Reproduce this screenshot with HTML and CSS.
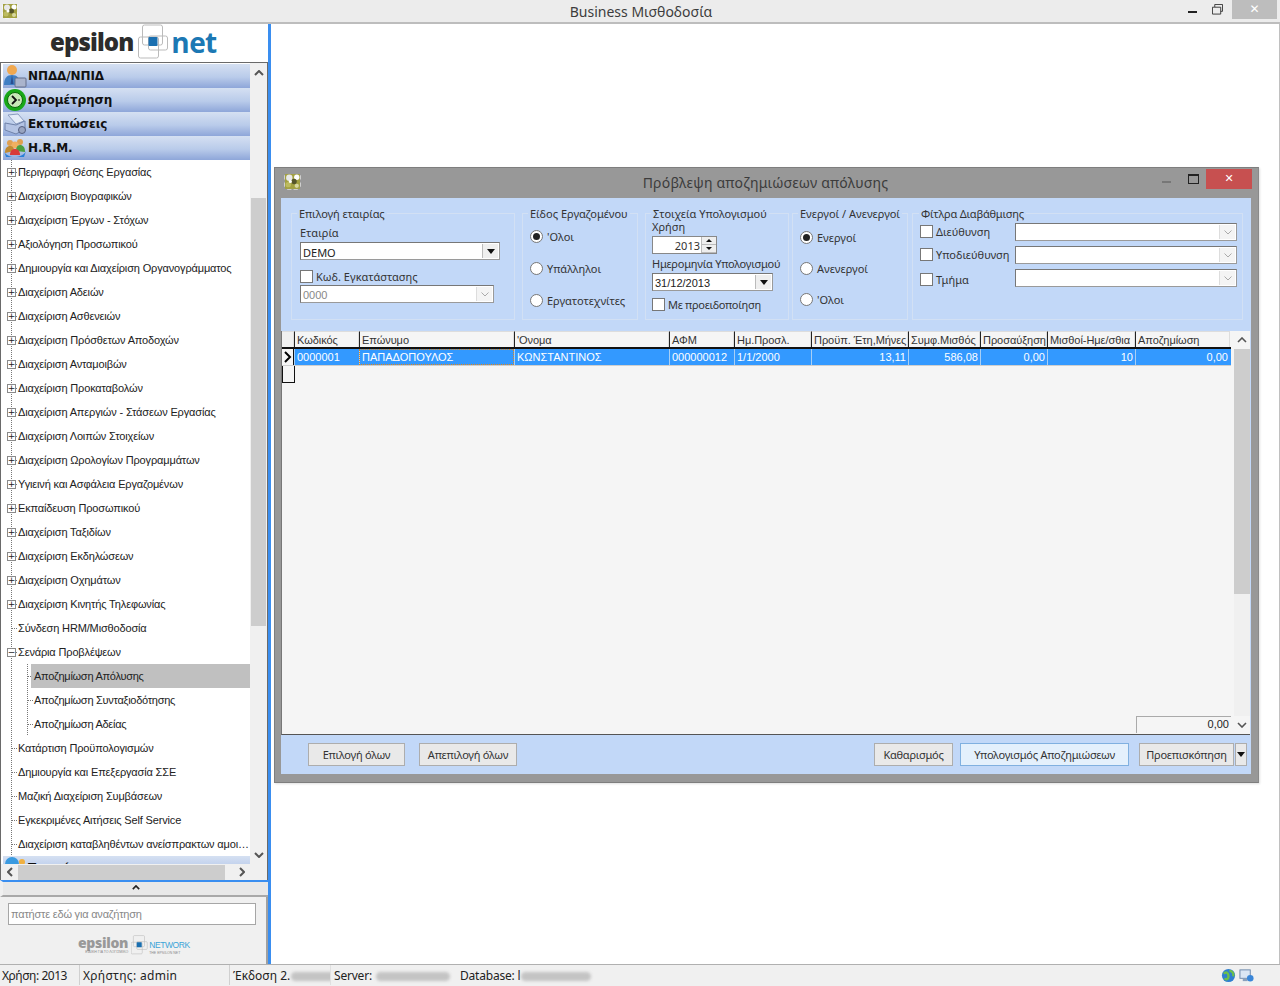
FILE: index.html
```html
<!DOCTYPE html>
<html lang="el">
<head>
<meta charset="utf-8">
<title>Business Μισθοδοσία</title>
<link rel="stylesheet" href="styles.css">
</head>
<body>
<svg class="defs" width="0" height="0" aria-hidden="true">
  <symbol id="app" viewBox="0 0 16 16">
    <rect x="1" y="1" width="14" height="14" fill="#a3a140"/>
    <circle cx="5" cy="4.500" r="3" fill="#e8e8e8"/><circle cx="12" cy="4" r="2.500" fill="#fff"/>
    <circle cx="9.500" cy="8" r="2.500" fill="#55552a"/><circle cx="4" cy="11" r="2.500" fill="#bdbb60"/>
    <circle cx="12" cy="12" r="2" fill="#d8d8a0"/><circle cx="6" cy="8" r="1.500" fill="#fff"/>
    <path d="M0 2v4M0 9v4M3 16h4M9 16h4M16 2v4M16 9v4" stroke="#fff" stroke-width="1"/>
  </symbol>
  <symbol id="squares" viewBox="0 0 30 36">
    <rect x="4" y="1" width="20" height="20" rx="2" fill="none" stroke="#bbb"/>
    <rect x="10" y="12" width="19" height="14" rx="2" fill="none" stroke="#bbb"/>
    <rect x="0" y="13" width="20" height="21" rx="2" fill="none" stroke="#bbb"/>
    <rect x="10" y="13" width="9" height="9" rx="1" fill="#1a6fb0"/>
  </symbol>
</svg>

<header class="titlebar">
  <svg class="app-icon"><use href="#app"/></svg>
  <div class="app-title">Business Μισθοδοσία</div>
  <div class="win-controls">
    <span class="ctl-min"></span>
    <svg class="ctl-max" viewBox="0 0 12 12"><path d="M3 3.500h6.500v7.500H.5V3.500H3V.5h8.500v7.500H9.500" fill="none" stroke="#333" stroke-width="1"/></svg>
    <span class="ctl-close">✕</span>
  </div>
</header>

<div class="main">
  <aside class="sidebar">
    <div class="logo">
      <span class="logo-e">epsilon</span>
      <svg class="logo-sq"><use href="#squares"/></svg>
      <span class="logo-n">net</span>
    </div>
    <div class="treebox">
      <div class="tree-top">
        <nav class="tree">
          <div class="hdr">
            <svg class="hdr-ic" viewBox="0 0 24 24"><circle cx="9" cy="6" r="5" fill="#f0a850"/><path d="M1 21c0-7 3-10 8-10s8 3 8 10z" fill="#3f7fc4"/><path d="M9 11l-1.500 9h3z" fill="#2a4f90"/><rect x="12" y="14" width="11" height="9" rx="1" fill="#aab4cc" stroke="#66708c"/></svg>
            <span>ΝΠΔΔ/ΝΠΙΔ</span>
          </div>
          <div class="hdr">
            <svg class="hdr-ic" viewBox="0 0 24 24"><circle cx="12" cy="12" r="11" fill="#18a818"/><circle cx="12" cy="12" r="7.500" fill="#c8e8b8" stroke="#0a6a0a"/><path d="M9 8l4 4-4 4" fill="none" stroke="#111" stroke-width="1.800"/><path d="M15 12h2" stroke="#111"/></svg>
            <span>Ωρομέτρηση</span>
          </div>
          <div class="hdr">
            <svg class="hdr-ic" viewBox="0 0 24 24"><path d="M5 3l10-1 6 7-8 3z" fill="#e4ecf8" stroke="#8a9cc0"/><path d="M2 11l11 2 9-4v8l-9 5-11-4z" fill="#b4c4e4" stroke="#6f82aa"/><circle cx="19" cy="18" r="3.500" fill="#98a4c0" stroke="#555f80"/></svg>
            <span>Εκτυπώσεις</span>
          </div>
          <div class="hdr">
            <svg class="hdr-ic" viewBox="0 0 24 24"><path d="M1 15c3 8 18 8 22 0l-2 6H3z" fill="#2a80d8"/><circle cx="7" cy="7" r="3" fill="#e0a050"/><circle cx="17" cy="6" r="3" fill="#e0a050"/><circle cx="12" cy="9" r="3.500" fill="#f0b060"/><path d="M2 17c0-5 2-7 5-7s4 2 4 5z" fill="#c08a30"/><path d="M13 15c0-3 1-6 4-6s5 2 5 7z" fill="#4aa040"/><path d="M7 19c0-4 2-6 5-6s5 2 5 6z" fill="#d83a3a"/></svg>
            <span>H.R.M.</span>
          </div>
          <div class="node"><i class="pm">+</i><span>Περιγραφή Θέσης Εργασίας</span></div>
          <div class="node"><i class="pm">+</i><span>Διαχείριση Βιογραφικών</span></div>
          <div class="node"><i class="pm">+</i><span>Διαχείριση Έργων - Στόχων</span></div>
          <div class="node"><i class="pm">+</i><span>Αξιολόγηση Προσωπικού</span></div>
          <div class="node"><i class="pm">+</i><span>Δημιουργία και Διαχείριση Οργανογράμματος</span></div>
          <div class="node"><i class="pm">+</i><span>Διαχείριση Αδειών</span></div>
          <div class="node"><i class="pm">+</i><span>Διαχείριση Ασθενειών</span></div>
          <div class="node"><i class="pm">+</i><span>Διαχείριση Πρόσθετων Αποδοχών</span></div>
          <div class="node"><i class="pm">+</i><span>Διαχείριση Ανταμοιβών</span></div>
          <div class="node"><i class="pm">+</i><span>Διαχείριση Προκαταβολών</span></div>
          <div class="node"><i class="pm">+</i><span>Διαχείριση Απεργιών - Στάσεων Εργασίας</span></div>
          <div class="node"><i class="pm">+</i><span>Διαχείριση Λοιπών Στοιχείων</span></div>
          <div class="node"><i class="pm">+</i><span>Διαχείριση Ωρολογίων Προγραμμάτων</span></div>
          <div class="node"><i class="pm">+</i><span>Υγιεινή και Ασφάλεια Εργαζομένων</span></div>
          <div class="node"><i class="pm">+</i><span>Εκπαίδευση Προσωπικού</span></div>
          <div class="node"><i class="pm">+</i><span>Διαχείριση Ταξιδίων</span></div>
          <div class="node"><i class="pm">+</i><span>Διαχείριση Εκδηλώσεων</span></div>
          <div class="node"><i class="pm">+</i><span>Διαχείριση Οχημάτων</span></div>
          <div class="node"><i class="pm">+</i><span>Διαχείριση Κινητής Τηλεφωνίας</span></div>
          <div class="node leaf"><span>Σύνδεση HRM/Μισθοδοσία</span></div>
          <div class="node"><i class="pm">−</i><span>Σενάρια Προβλέψεων</span></div>
          <div class="child selected"><span>Αποζημίωση Απόλυσης</span></div>
          <div class="child"><span>Αποζημίωση Συνταξιοδότησης</span></div>
          <div class="child"><span>Αποζημίωση Αδείας</span></div>
          <div class="node leaf"><span>Κατάρτιση Προϋπολογισμών</span></div>
          <div class="node leaf"><span>Δημιουργία και Επεξεργασία ΣΣΕ</span></div>
          <div class="node leaf"><span>Μαζική Διαχείριση Συμβάσεων</span></div>
          <div class="node leaf"><span>Εγκεκριμένες Αιτήσεις Self Service</span></div>
          <div class="node leaf"><span>Διαχείριση καταβληθέντων ανείσπρακτων αμοι…</span></div>
          <div class="hdr">
            <svg class="hdr-ic" viewBox="0 0 24 24"><circle cx="9" cy="8" r="7" fill="#3a9ae0"/><circle cx="19" cy="6" r="3" fill="#f0b040"/></svg>
            <span>Τροφή</span>
          </div>
        </nav>
        <div class="vbar">
          <svg class="arr" viewBox="0 0 10 6"><path d="M1 5l4-4 4 4" fill="none" stroke="#555" stroke-width="2"/></svg>
          <div class="v-track"><div class="v-thumb"></div></div>
          <svg class="arr" viewBox="0 0 10 6"><path d="M1 1l4 4 4-4" fill="none" stroke="#555" stroke-width="2"/></svg>
        </div>
      </div>
      <div class="hbar">
        <svg class="arr-h" viewBox="0 0 6 10"><path d="M5 1L1 5l4 4" fill="none" stroke="#555" stroke-width="2"/></svg>
        <div class="h-track"><div class="h-thumb"></div></div>
        <svg class="arr-h" viewBox="0 0 6 10"><path d="M1 1l4 4-4 4" fill="none" stroke="#555" stroke-width="2"/></svg>
      </div>
    </div>
    <div class="collapse">
      <svg class="arr-c" viewBox="0 0 10 6"><path d="M1 5l4-4 4 4" fill="none" stroke="#222" stroke-width="2"/></svg>
    </div>
    <div class="search-panel">
      <div class="search">πατήστε εδώ για αναζήτηση</div>
      <div class="netlogo">
        <div class="netlogo-l"><span class="nl-e">epsilon</span><span class="nl-s">ΕΙΔΙΚΗ ΓΙΑ ΤΟ ΛΟΓΙΣΜΙΚΟ</span></div>
        <svg class="nl-sq"><use href="#squares"/></svg>
        <div class="netlogo-r"><span class="nl-n">NETWORK</span><span class="nl-s nl-s2">THE EPSILON NET</span></div>
      </div>
    </div>
  </aside>
  <div class="workspace"></div>
</div>

<footer class="status">
  <span class="st st-year">Χρήση: 2013</span>
  <span class="st st-user">Χρήστης: admin</span>
  <span class="st st-ver">Έκδοση 2.<b class="blur b1"></b></span>
  <span class="st st-srv">Server: <b class="blur b2"></b></span>
  <span class="st st-db">Database: l<b class="blur b3"></b></span>
  <span class="st-icons">
    <svg class="st-ic" viewBox="0 0 16 16"><circle cx="8" cy="8" r="7" fill="#2f7fd0"/><path d="M3 6c3-3 5 0 5 3s-3 4-4 2M9 3c3 0 5 3 4 6" fill="none" stroke="#6cc04a" stroke-width="2.500"/></svg>
    <svg class="st-ic" viewBox="0 0 16 16"><rect x="1" y="2" width="11" height="9" fill="#dbe6f4" stroke="#6a86aa"/><rect x="4" y="11" width="5" height="3" fill="#8aa0bc"/><circle cx="12" cy="11" r="3.500" fill="#3a86d8"/></svg>
  </span>
</footer>

<section class="dialog">
  <div class="dlg-title">
    <svg class="dlg-icon"><use href="#app"/></svg>
    <div class="dlg-name">Πρόβλεψη αποζημιώσεων απόλυσης</div>
    <span class="dlg-min"></span>
    <span class="dlg-max"></span>
    <span class="dlg-close">✕</span>
  </div>
  <div class="dlg-body">
    <div class="filters">
      <fieldset class="grp g1">
        <legend>Επιλογή εταιρίας</legend>
        <div class="lbl">Εταιρία</div>
        <div class="combo c-demo"><span class="c-val val-big">DEMO</span><span class="c-btn"><i class="tri"></i></span></div>
        <div class="chk-row r-kod"><span class="chk"></span><span>Κωδ. Εγκατάστασης</span></div>
        <div class="combo c-off"><span class="c-val dis">0000</span><span class="c-btn off"><svg viewBox="0 0 8 5"><path d="M.5.5L4 4 7.500.5" fill="none" stroke="#aaa"/></svg></span></div>
      </fieldset>
      <fieldset class="grp g2">
        <legend>Είδος Εργαζομένου</legend>
        <div class="radio"><span class="rd on"></span>'Ολοι</div>
        <div class="radio"><span class="rd"></span>Υπάλληλοι</div>
        <div class="radio"><span class="rd"></span>Εργατοτεχνίτες</div>
      </fieldset>
      <fieldset class="grp g3">
        <legend>Στοιχεία Υπολογισμού</legend>
        <div class="lbl">Χρήση</div>
        <div class="spin"><span class="spin-v">2013</span><span class="spin-b"><i class="up"></i><i class="dn"></i></span></div>
        <div class="lbl l-date">Ημερομηνία Υπολογισμού</div>
        <div class="combo c-date"><span class="c-val">31/12/2013</span><span class="c-btn"><i class="tri"></i></span></div>
        <div class="chk-row r-warn"><span class="chk"></span><span>Με προειδοποίηση</span></div>
      </fieldset>
      <fieldset class="grp g4">
        <legend>Ενεργοί / Ανενεργοί</legend>
        <div class="radio"><span class="rd on"></span>Ενεργοί</div>
        <div class="radio"><span class="rd"></span>Ανενεργοί</div>
        <div class="radio"><span class="rd"></span>'Ολοι</div>
      </fieldset>
      <fieldset class="grp g5">
        <legend>Φίτλρα Διαβάθμισης</legend>
        <div class="flt"><span class="chk"></span><span class="flt-l">Διεύθυνση</span><div class="combo c-flt"><span class="c-val"></span><span class="c-btn off"><svg viewBox="0 0 8 5"><path d="M.5.5L4 4 7.500.5" fill="none" stroke="#aaa"/></svg></span></div></div>
        <div class="flt"><span class="chk"></span><span class="flt-l">Υποδιεύθυνση</span><div class="combo c-flt"><span class="c-val"></span><span class="c-btn off"><svg viewBox="0 0 8 5"><path d="M.5.5L4 4 7.500.5" fill="none" stroke="#aaa"/></svg></span></div></div>
        <div class="flt flt-last"><span class="chk"></span><span class="flt-l">Τμήμα</span><div class="combo c-flt"><span class="c-val"></span><span class="c-btn off"><svg viewBox="0 0 8 5"><path d="M.5.5L4 4 7.500.5" fill="none" stroke="#aaa"/></svg></span></div></div>
      </fieldset>
    </div>
    <div class="grid">
      <div class="grid-main">
        <div class="g-row g-head">
          <span class="ind"></span><span>Κωδικός</span><span>Επώνυμο</span><span>'Ονομα</span><span>ΑΦΜ</span><span>Ημ.Προσλ.</span><span>Προϋπ. Έτη,Μήνες</span><span>Συμφ.Μισθός</span><span>Προσαύξηση</span><span>Μισθοί-Ημε/σθια</span><span>Αποζημίωση</span>
        </div>
        <div class="g-row g-sel">
          <span class="ind"><svg viewBox="0 0 8 12"><path d="M1 1l5 5-5 5" fill="none" stroke="#000" stroke-width="2"/></svg></span><span>0000001</span><span class="focus">ΠΑΠΑΔΟΠΟΥΛΟΣ</span><span>ΚΩΝΣΤΑΝΤΙΝΟΣ</span><span>000000012</span><span>1/1/2000</span><span class="num">13,11</span><span class="num">586,08</span><span class="num">0,00</span><span class="num">10</span><span class="num">0,00</span>
        </div>
        <div class="new-ind"></div>
        <div class="total">0,00</div>
      </div>
      <div class="g-scroll">
        <svg class="arr" viewBox="0 0 10 6"><path d="M1 5l4-4 4 4" fill="none" stroke="#555" stroke-width="1.600"/></svg>
        <div class="g-track"><div class="g-thumb"></div></div>
        <svg class="arr" viewBox="0 0 10 6"><path d="M1 1l4 4 4-4" fill="none" stroke="#555" stroke-width="1.600"/></svg>
      </div>
    </div>
    <div class="actions">
      <button class="btn b-all">Επιλογή όλων</button>
      <button class="btn b-none">Απεπιλογή όλων</button>
      <span class="spacer"></span>
      <button class="btn b-clear">Καθαρισμός</button>
      <button class="btn b-calc">Υπολογισμός Αποζημιώσεων</button>
      <button class="btn b-prev">Προεπισκόπηση</button>
      <button class="btn b-drop"><i class="tri"></i></button>
    </div>
  </div>
</section>
</body>
</html>
```
FILE: styles.css
```css
* { box-sizing: border-box; }
html, body { margin: 0; padding: 0; }
body {
  width: 1280px; height: 986px; overflow: hidden; position: relative;
  display: flex; flex-direction: column;
  background: #fff; color: #222;
  font: 11px/13px "Liberation Sans", Arial, sans-serif;
}
.defs { position: absolute; }

/* title bar */
.titlebar {
  height: 24px; flex: none; display: flex; align-items: flex-start;
  background: #ececec; border-bottom: 2px solid #bdbdbd;
}
.app-icon { width: 16px; height: 16px; margin: 3px 0 0 2px; flex: none; }
.app-title {
  flex: 1; text-align: center; padding: 3px 0 0 0; margin-left: 76px;
  font: 14px/18px "Noto Sans", sans-serif; color: #3c3c3c;
}
.win-controls { display: flex; align-items: flex-start; flex: none; margin-right: 3px; }
.ctl-min { width: 9px; height: 2px; background: #222; margin: 11px 0 0 0; }
.ctl-max { width: 11px; height: 11px; margin: 4px 0 0 15px; }
.ctl-close {
  width: 45px; height: 19px; margin-left: 9px; background: #bdbdbd; color: #fff;
  text-align: center; font: bold 12px/19px "DejaVu Sans", sans-serif;
}

.main { flex: 1; display: flex; min-height: 0; }
.sidebar {
  width: 272px; flex: none; display: flex; flex-direction: column;
  border-right: 1px solid #fff; position: relative;
  background: linear-gradient(90deg, #fff 268px, #3a8ef0 268px);
}
.logo {
  height: 38px; width: 268px; flex: none; display: flex; align-items: center; padding: 0 0 2px 50px;
}
.logo-e { font: 800 24px/30px "Open Sans", sans-serif; color: #2c2c2c; letter-spacing: -0.9px; }
.logo-sq { width: 31px; height: 36px; margin-left: 5px; flex: none; }
.logo-n { font: 700 28px/30px "Open Sans", sans-serif; color: #1c78b4; margin-left: 2px; letter-spacing: -0.6px; }

.treebox {
  width: 268px; height: 818px; flex: none; display: flex; flex-direction: column;
  border: 1px solid #6a6a6a; border-bottom: 0; background: #f0f0f0;
}
.tree-top { flex: 1; display: flex; min-height: 0; }
.tree { width: 249px; flex: none; overflow: hidden; background: #fff; padding: 1px 0 0 2px; }
.hdr {
  height: 24px; display: flex; align-items: center;
  background: linear-gradient(180deg, #d5e0f2 0%, #b9cbea 55%, #8ea6d9 100%);
  font: bold 12px/16px "DejaVu Sans", sans-serif; color: #111;
}
.hdr span { margin-left: 1px; letter-spacing: -0.1px; }
.hdr-ic { width: 24px; height: 24px; flex: none; }
.node, .child {
  height: 24px; display: flex; align-items: center; color: #222; white-space: nowrap;
  font: 11px/13px "Liberation Sans", sans-serif; letter-spacing: -0.15px;
  background-image: repeating-linear-gradient(180deg, #777 0 1px, transparent 1px 2px), repeating-linear-gradient(90deg, #777 0 1px, transparent 1px 2px);
  background-size: 1px 100%, 6px 1px;
  background-position: 8px 0, 9px 12px;
  background-repeat: no-repeat;
}
.node { padding: 0 0 0 15px; }
.node .pm {
  margin-left: -11px; margin-right: 2px; width: 9px; height: 9px; flex: none; background: #fff;
  border: 1px solid #8a8a8a; display: flex; align-items: center; justify-content: center;
  font: normal 9px/7px "DejaVu Sans", sans-serif; color: #222;
}
.child {
  letter-spacing: -0.27px;
  background-image: repeating-linear-gradient(180deg, #777 0 1px, transparent 1px 2px), repeating-linear-gradient(180deg, #777 0 1px, transparent 1px 2px), repeating-linear-gradient(90deg, #777 0 1px, transparent 1px 2px);
  background-size: 1px 100%, 1px 100%, 6px 1px;
  background-position: 8px 0, 24px 0, 25px 12px;
}
.child span { margin-left: 28px; height: 24px; flex: 1; line-height: 24px; padding-left: 3px; }
.child.selected span { background: #c0c0c0; }

.vbar { flex: 1; display: flex; flex-direction: column; align-items: center; background: #f0f0f0; padding: 3px 0 2px; }
.arr { width: 10px; height: 6px; flex: none; margin: 4px 0; }
.v-track { flex: 1; width: 100%; padding: 118px 1px 0; }
.v-thumb { height: 428px; background: #cdcdcd; }
.hbar { height: 16px; flex: none; display: flex; align-items: center; background: #f0f0f0; padding: 0 0 0 6px; }
.arr-h { width: 6px; height: 10px; flex: none; }
.h-track { width: 226px; padding: 0 0 0 5px; height: 15px; }
.h-thumb { width: 207px; height: 15px; background: #cdcdcd; }
.collapse {
  width: 268px; height: 17px; flex: none; border-top: 2px solid #3a8ef0; border-left: 3px solid #f0f0f0;
  background: #e8e8e8; display: flex; justify-content: center; align-items: center; padding: 0 0 3px 0;
  border-bottom: 2px solid #a8a8a8;
}
.arr-c { width: 8px; height: 5px; }
.search-panel { width: 268px; flex: 1; background: #f0f0f0; border-right: 2px solid #a0a0a0; padding: 6px 0 0 8px; }
.search {
  width: 248px; height: 22px; background: #fff; border: 1px solid #a6a6a6; padding: 4px 2px 2px;
  color: #888; font: 11px/13px "Liberation Sans", sans-serif; letter-spacing: -0.2px;
}
.netlogo { display: flex; margin: 10px 0 0 70px; align-items: flex-start; }
.netlogo-l { display: flex; flex-direction: column; align-items: flex-end; }
.nl-e { font: 800 14px/15px "Open Sans", sans-serif; color: #999; letter-spacing: -0.3px; }
.nl-s { font-size: 3.500px; line-height: 5px; color: #888; white-space: nowrap; letter-spacing: 0; }
.nl-sq { width: 17px; height: 20px; margin-left: 3px; flex: none; }
.netlogo-r { display: flex; flex-direction: column; margin: 5px 0 0 1px; }
.nl-n { font: 8.500px/10px "Liberation Sans", sans-serif; color: #3aa4d8; letter-spacing: -0.4px; }
.nl-s2 { margin-top: 1px; }
.workspace { flex: 1; border-right: 1px solid #c0c0c0; }

/* status */
.status {
  height: 22px; flex: none; display: flex; align-items: center; background: #f0f0f0;
  border-top: 1px solid #b0b0b0; border-bottom: 1px solid #f0f0f0;
  font: 12px/16px "Noto Sans", sans-serif; color: #222; white-space: nowrap;
}
.st { height: 100%; padding: 3px 0 0 2px; overflow: hidden; display: block; }
.st-year { width: 80px; border-right: 1px solid #d0d0d0; letter-spacing: -0.45px; }
.st-user { width: 150px; padding-left: 3px; border-right: 1px solid #d0d0d0; letter-spacing: 0.3px; }
.st-ver { width: 101px; padding-left: 3px; border-right: 1px solid #e0e0e0; }
.st-srv { width: 127px; padding-left: 3px; letter-spacing: -0.2px; }
.st-db { width: 200px; letter-spacing: -0.2px; }
.blur { display: inline-block; height: 9px; background: #c4c4c4; border-radius: 6px; filter: blur(1.5px); vertical-align: -1px; margin-left: 1px; }
.b1 { width: 50px; }
.b2 { width: 74px; }
.b3 { width: 70px; }
.st-icons { margin-left: auto; display: flex; gap: 3px; padding-right: 26px; }
.st-ic { width: 15px; height: 15px; flex: none; }

/* dialog window */
.dialog {
  position: absolute; left: 274px; top: 167px; width: 985px; height: 616px;
  background: #989898; border: 1px solid #7e7e7e; border-right-color: #8a8a8a;
  box-shadow: 1px 1px 2px rgba(0,0,0,.12);
  display: flex; flex-direction: column;
}
.dlg-title { height: 30px; flex: none; display: flex; align-items: flex-start; }
.dlg-icon { width: 17px; height: 17px; margin: 5px 0 0 9px; flex: none; }
.dlg-name { flex: 1; text-align: center; padding: 6px 0 0 0; margin-left: 68px; font: 14px/18px "Noto Sans", sans-serif; color: #3c3c3c; letter-spacing: 0.22px; }
.dlg-min { width: 9px; height: 2px; background: #777; margin: 13px 0 0 0; }
.dlg-max { width: 11px; height: 10px; border: 1px solid #222; border-top-width: 2px; margin: 6px 0 0 17px; }
.dlg-close {
  width: 46px; height: 20px; margin: 1px 6px 0 7px; background: #c75050; color: #fff;
  text-align: center; font: bold 11px/20px "DejaVu Sans", sans-serif;
}
.dlg-body { flex: 1; margin: 0 7px 8px 6px; display: flex; flex-direction: column; background: #c2d8f8; min-height: 0; }
.filters { height: 133px; flex: none; display: flex; padding: 9px 0 0 10px; color: #333; }
.grp {
  margin: 0; min-width: 0; height: 113px; border: 1px solid #d2e0f4; padding: 0; flex: none;
}
.grp legend { padding: 0 2px; font: 11px/13px "Noto Sans", sans-serif; color: #333; white-space: nowrap; }
.g1 { width: 224px; padding-left: 8px; }
.g2 { width: 116px; margin-left: 7px; padding-left: 7px; }
.g3 { width: 144px; margin-left: 7px; padding-left: 6px; }
.g4 { width: 116px; margin-left: 3px; padding-left: 7px; }
.g5 { width: 331px; margin-left: 4px; padding-left: 7px; }
.g1 legend { margin-left: -3px; letter-spacing: -0.1px; }
.g2 legend { margin-left: -2px; }
.g3 legend { margin-left: -1px; }
.g4 legend { margin-left: -2px; }
.g5 legend { margin-left: -1px; letter-spacing: -0.2px; }
.lbl { font: 11px/13px "Noto Sans", sans-serif; color: #333; white-space: nowrap; }
.g1 .lbl { margin-top: 6px; }
.combo { display: flex; align-items: stretch; background: #fff; border: 1px solid; border-color: #777 #9a9a9a #9a9a9a #777; }
.c-val { flex: 1; padding: 3px 0 0 2px; font: 11px/13px "Liberation Sans", sans-serif; color: #222; }
.val-big { font: 11px/13px "Noto Sans", sans-serif; }
.dis { color: #888; }
.c-btn { width: 16px; flex: none; background: #efefef; border-left: 1px solid #bbb; margin: 1px; margin-left: 0; display: flex; align-items: center; justify-content: center; }
.c-btn.off { background: #f4f4f4; border-left-color: #ddd; }
.c-btn svg { width: 8px; height: 5px; }
.tri { width: 0; height: 0; border: 4px solid transparent; border-top: 5px solid #111; border-bottom: 0; display: block; }
.c-demo { width: 200px; height: 18px; margin-top: 3px; }
.c-off { width: 194px; height: 18px; margin-top: 2px; }
.chk-row { display: flex; align-items: center; gap: 3px; white-space: nowrap; font: 11px/13px "Noto Sans", sans-serif; }
.chk { width: 13px; height: 13px; flex: none; background: #fff; border: 1px solid #777; display: block; }
.r-kod { margin-top: 9px; height: 14px; }
.radio { display: flex; align-items: center; height: 14px; gap: 4px; font: 11px/13px "Noto Sans", sans-serif; margin-bottom: 18px; white-space: nowrap; }
.g2 .radio:first-of-type { margin-top: 9px; }
.g4 .radio:first-of-type { margin-top: 10px; }
.g4 .radio { margin-bottom: 17px; }
.rd { width: 13px; height: 13px; flex: none; border-radius: 50%; background: #fff; border: 1px solid #777; display: flex; align-items: center; justify-content: center; }
.rd.on::after { content: ""; width: 7px; height: 7px; background: #222; border-radius: 50%; }
.g3 .lbl:first-of-type { margin-top: 0; }
.spin { width: 65px; height: 18px; margin-top: 3px; display: flex; background: #fff; border: 1px solid #888; }
.spin-v { flex: 1; text-align: right; padding: 2px 1px 0 0; font: 11px/13px "Noto Sans", sans-serif; }
.spin-b { width: 15px; flex: none; display: flex; flex-direction: column; background: #eee; border-left: 1px solid #bbb; }
.spin-b i { flex: 1; display: flex; justify-content: center; align-items: center; border-bottom: 1px solid #bbb; }
.up::after { content: ""; border: 3px solid transparent; border-bottom: 3px solid #111; border-top: 0; }
.dn::after { content: ""; border: 3px solid transparent; border-top: 3px solid #111; border-bottom: 0; }
.l-date { margin-top: 3px; letter-spacing: -0.22px; }
.c-date { width: 121px; height: 18px; margin-top: 3px; }
.r-warn { margin-top: 7px; height: 13px; letter-spacing: -0.3px; }
.flt { display: flex; align-items: flex-start; height: 23px; white-space: nowrap; font: 11px/13px "Noto Sans", sans-serif; }
.flt:first-of-type { margin-top: 3px; }
.flt .chk { margin-top: 2px; }
.flt-l { width: 79px; margin: 2px 0 0 3px; flex: none; }
.flt-last .chk { margin-top: 4px; }
.flt-last .flt-l { margin-top: 4px; }
.c-flt { width: 222px; height: 18px; }

/* grid */
.grid { height: 404px; flex: none; margin: 0 1px 0 0; background: #f5f5f5; display: flex; border-bottom: 1px solid #555; border-left: 1px solid #777; }
.grid-main { width: 949px; flex: none; display: flex; flex-direction: column; }
.g-row {
  display: grid;
  grid-template-columns: 12px 65px 155px 155px 65px 77px 97px 72px 67px 88px 95px;
}
.g-row span { white-space: nowrap; overflow: hidden; font: 11px/16px "Liberation Sans", sans-serif; padding: 0 2px; }
.g-head { height: 18px; background: #f5f5f5; border-bottom: 2px solid #111; }
.g-head span { border-left: 1px solid #222; border-right: 1px solid #ddd; border-top: 1px solid #ddd; color: #333; letter-spacing: -0.05px; }
.g-head .ind { background: #f0f0f0; border-left: 0; }
.g-sel { height: 17px; background: #3399ff; color: #fff; border-bottom: 1px solid #cfcfcf; }
.g-sel span { border-left: 1px solid #a8cff5; }
.g-sel .ind { background: #f5f5f5; border-right: 1px solid #111; border-left: 0; padding: 2px 2px 0; }
.g-sel .ind svg { width: 8px; height: 12px; display: block; }
.focus { outline: 1px dotted #e0861a; outline-offset: -1px; }
.num { text-align: right; }
.new-ind { width: 13px; height: 17px; flex: none; border-right: 1px solid #111; border-bottom: 1px solid #111; border-left: 1px solid #111; }
.total { margin: auto 0 1px auto; width: 95px; height: 17px; border: 1px solid #aaa; border-right: 0; border-bottom: 0; text-align: right; padding: 0 2px 0 0; font: 11px/15px "Liberation Sans", sans-serif; }
.g-scroll { flex: 1; display: flex; flex-direction: column; align-items: center; padding: 0 0 0 3px; }
.g-scroll .arr { margin: 6px 0; }
.g-track { flex: 1; width: 100%; background: #f0f0f0; }
.g-thumb { height: 245px; background: #cdcdcd; }

/* actions */
.actions { flex: 1; display: flex; align-items: flex-start; padding: 8px 0 0 27px; }
.spacer { flex: 1; }
.btn {
  height: 23px; padding: 0; background: #e9e9e9; border: 1px solid #adadad; color: #333;
  font: 11px/13px "Noto Sans", sans-serif; letter-spacing: -0.25px; flex: none; white-space: nowrap;
}
.b-all { width: 97px; }
.b-none { width: 98px; margin-left: 14px; }
.b-clear { width: 79px; }
.b-calc { width: 169px; margin-left: 7px; background: #e4f0fc; border-color: #80b0e0; }
.b-prev { width: 95px; margin-left: 10px; }
.b-drop { width: 12px; margin: 0 4px 0 1px; display: flex; align-items: center; justify-content: center; }
```
